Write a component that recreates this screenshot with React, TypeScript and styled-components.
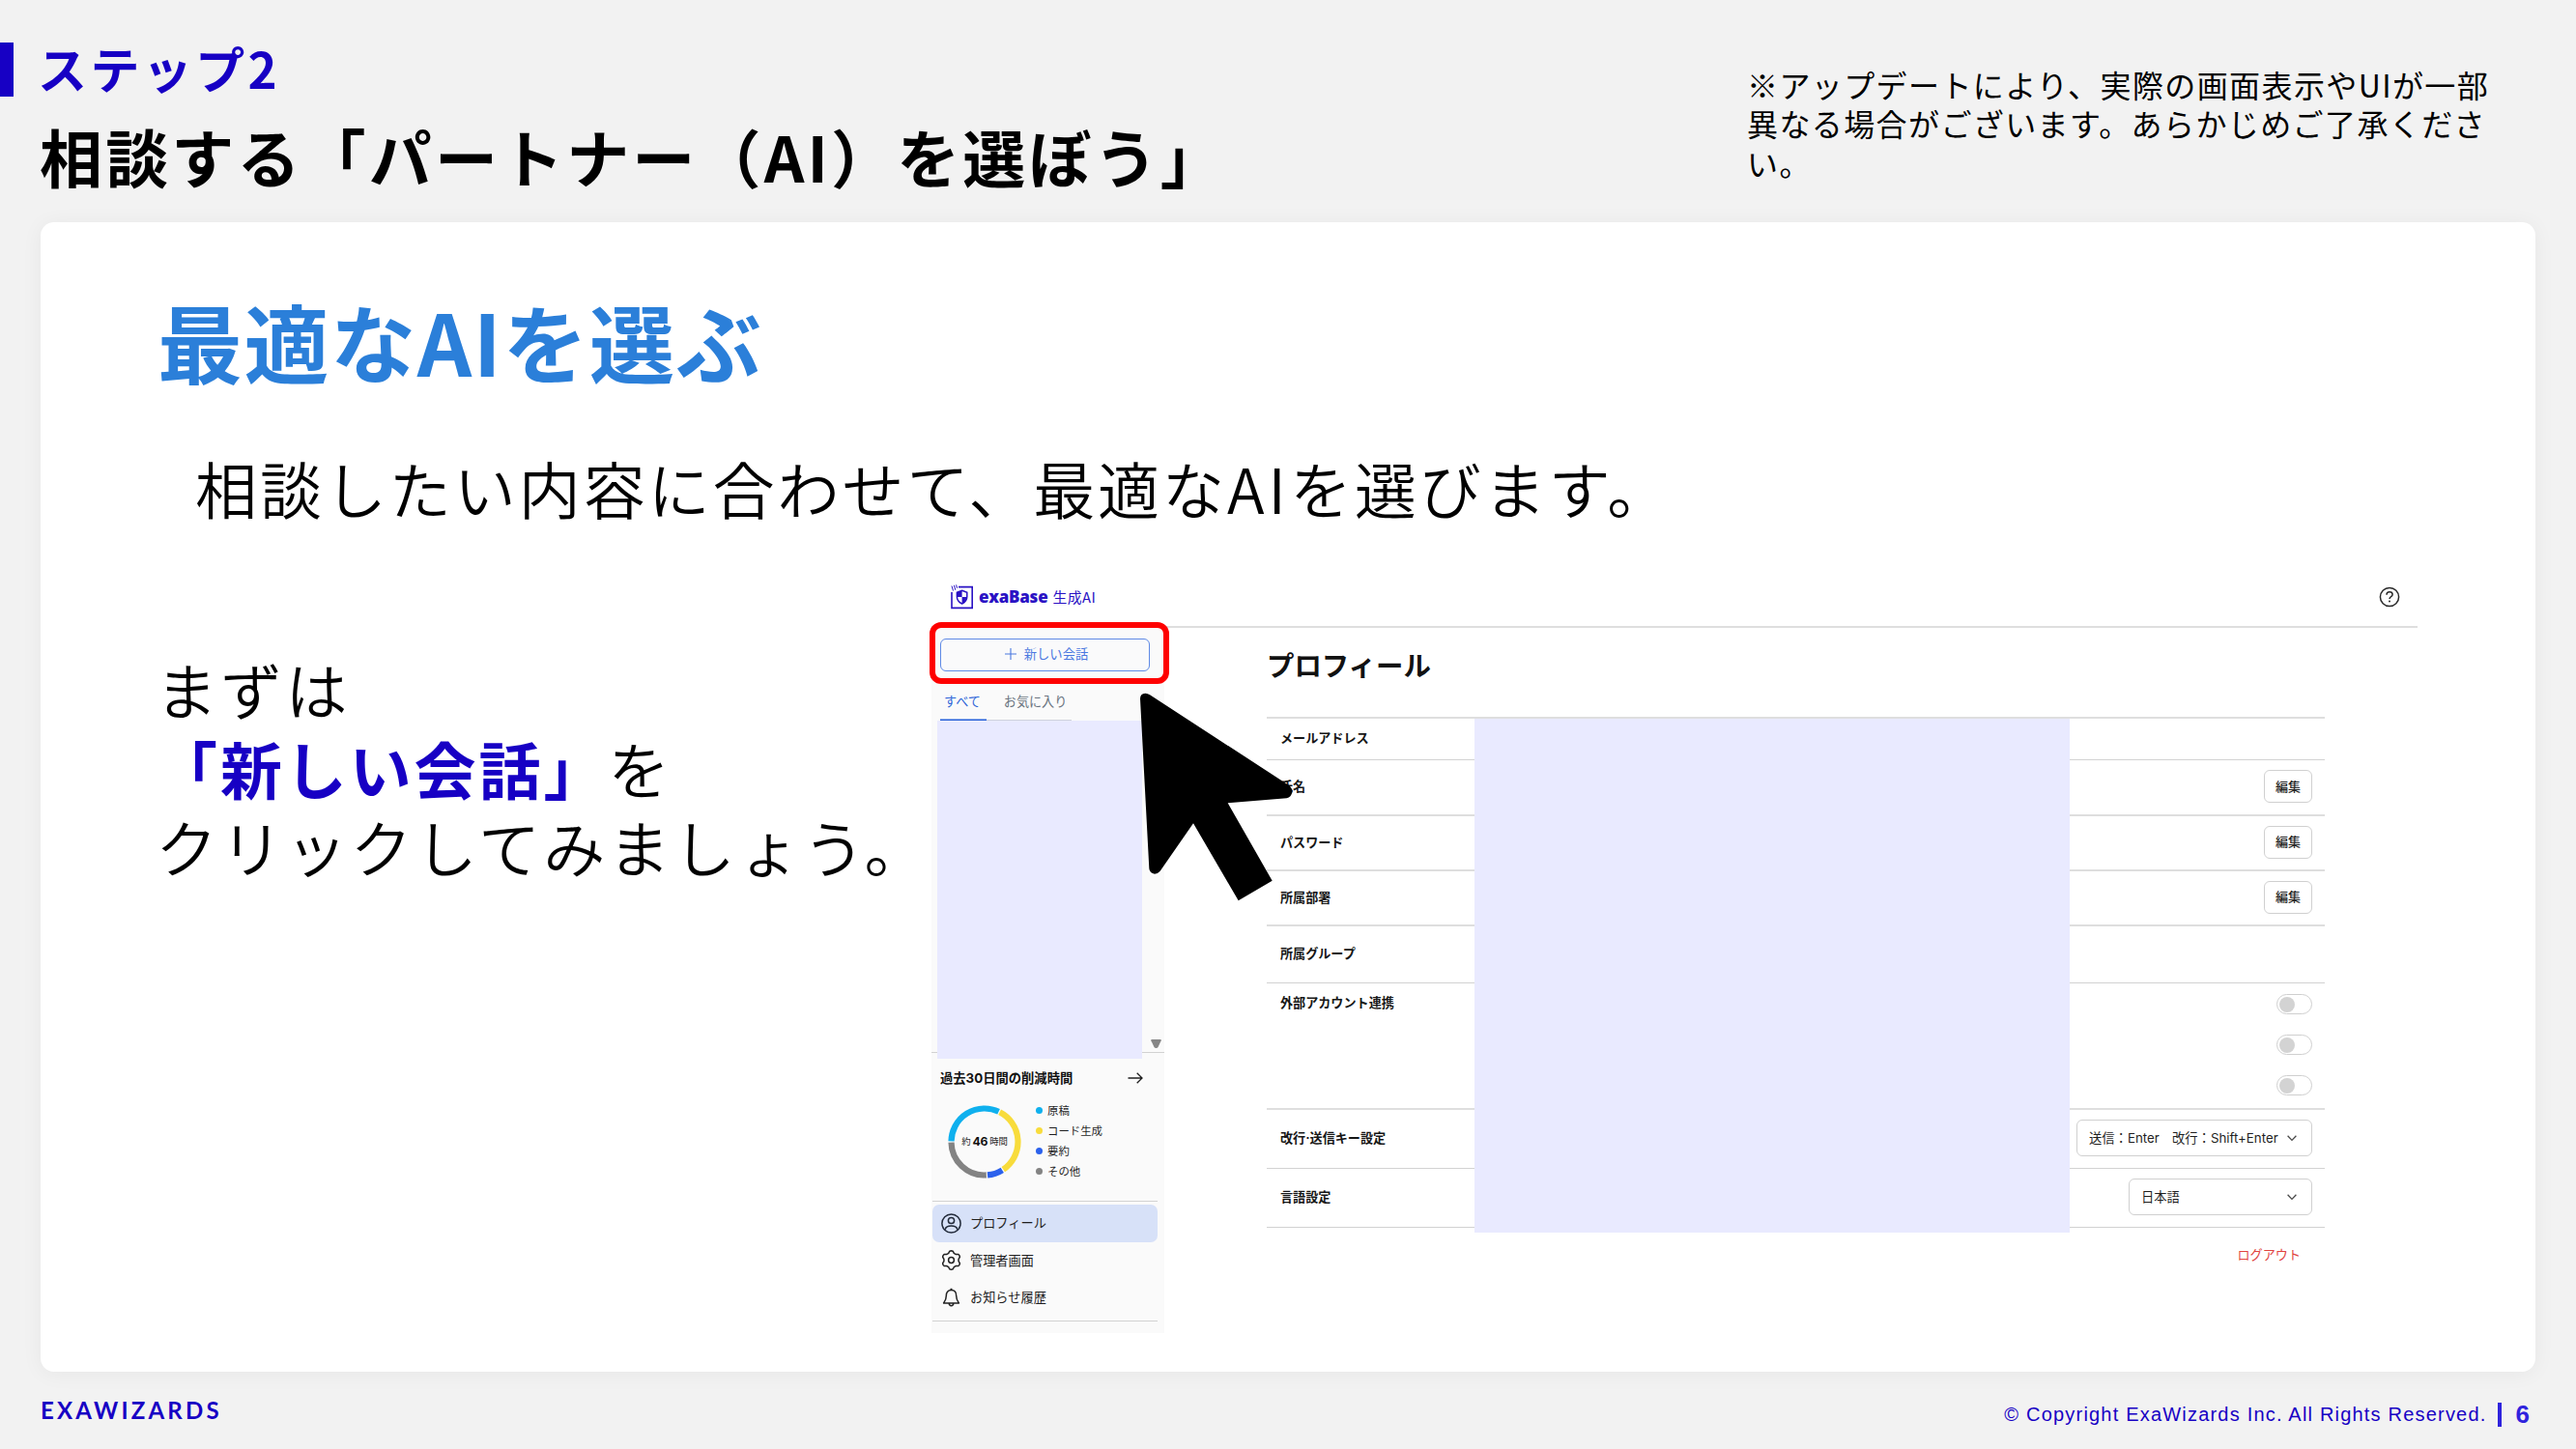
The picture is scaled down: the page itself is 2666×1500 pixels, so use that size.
import React from 'react';
import styled, { createGlobalStyle, css } from 'styled-components';

const JP = `'Noto Sans CJK JP', sans-serif`;
const UI = `Inter, 'Noto Sans CJK JP', sans-serif`;
const NAVY = '#1700c4';

const GlobalStyle = createGlobalStyle`
  *, *::before, *::after { box-sizing: border-box; }
  body { margin: 0; background: #f2f2f2; }
  p, h1, h2, h3, ul { margin: 0; padding: 0; font-weight: inherit; }
  svg { display: block; flex: none; }
`;

const Slide = styled.div`
  display: flex;
  flex-direction: column;
  width: 2666px;
  height: 1500px;
  overflow: hidden;
  background: #f2f2f2;
  color: #000;
  font-family: ${JP};
`;

/* ---------- slide header ---------- */

const Header = styled.header`
  display: flex;
  justify-content: space-between;
  height: 230px;
  padding-right: 57px;
`;

const Titles = styled.div`
  padding-top: 44px;
`;

const StepRow = styled.div`
  display: flex;
  align-items: center;
  height: 56px;
`;

const StepMarker = styled.span`
  width: 14px;
  height: 56px;
  margin-right: 25px;
  background: ${NAVY};
`;

const StepLabel = styled.p`
  margin-top: -5px;
  color: ${NAVY};
  font-size: 51px;
  font-weight: 700;
  line-height: 56px;
  letter-spacing: 3.4px;
`;

const Title = styled.h1`
  padding: 16px 0 0 41px;
  font-size: 65px;
  font-weight: 700;
  line-height: 90px;
  letter-spacing: 3.15px;
  white-space: nowrap;
`;

const Notice = styled.p`
  width: 801px;
  padding-top: 67px;
  font-size: 32px;
  line-height: 40.3px;
  letter-spacing: 1.4px;
  white-space: nowrap;
`;

/* ---------- card ---------- */

const Card = styled.main`
  display: flex;
  flex-direction: column;
  width: 2582px;
  height: 1190px;
  margin-left: 42px;
  padding: 66px 0 0 122px;
  border-radius: 14px;
  background: #fff;
  box-shadow: 0 2px 22px rgba(0, 0, 0, 0.05);
`;

const Headline = styled.h2`
  margin-left: -1px;
  color: #2b7fd9;
  font-size: 88px;
  font-weight: 700;
  line-height: 112px;
  letter-spacing: 1.6px;
`;

const Lead = styled.p`
  padding: 56px 0 0 38px;
  font-size: 64px;
  font-weight: 350;
  line-height: 80px;
  letter-spacing: 2.95px;
  white-space: nowrap;
`;

const Latin = styled.span`
  letter-spacing: 4px;
`;

const Columns = styled.div`
  display: flex;
  margin-top: 50px;
`;

const Guide = styled.p`
  width: 803px;
  margin-left: -3px;
  padding-top: 78px;
  font-size: 64px;
  font-weight: 350;
  line-height: 81.5px;
  letter-spacing: 3.2px;
  white-space: nowrap;
`;

const Strong = styled.strong`
  color: ${NAVY};
  font-weight: 700;
  letter-spacing: 2.9px;
`;

/* ---------- product window ---------- */

const Window = styled.section`
  position: relative;
  width: 1538px;
  height: 786px;
  color: #1f1f1f;
  font-family: ${UI};
  font-size: 13.1px;
  line-height: 18px;
`;

const TopBar = styled.div`
  display: flex;
  align-items: center;
  justify-content: space-between;
  height: 56px;
  padding: 0 18px 7px 20px;
  border-bottom: 2px solid #dedede;
`;

const Brand = styled.div`
  display: flex;
  align-items: center;
  color: #2a12c4;
`;

const BrandName = styled.span`
  margin-left: 6px;
  font-family: 'Open Sans', sans-serif;
  font-size: 17px;
  font-weight: 800;
  line-height: 22px;
  letter-spacing: -0.25px;
`;

const BrandSuffix = styled.span`
  margin-left: 5px;
  font-family: ${JP};
  font-size: 14.8px;
  line-height: 20px;
  letter-spacing: 0.5px;
`;

const Body = styled.div`
  display: flex;
`;

const Sidebar = styled.aside`
  width: 241px;
  height: 730px;
  background: #fafafa;
`;

const NewChat = styled.button`
  display: flex;
  align-items: center;
  justify-content: center;
  gap: 8px;
  width: 217px;
  height: 34px;
  margin: 11px 0 0 9px;
  padding: 0 0 3px 3px;
  border: 1.5px solid #5f8ae6;
  border-radius: 6px;
  background: #fafafb;
  color: #4a78e0;
  font-family: ${UI};
  font-size: 13.3px;
`;

const Tabs = styled.div`
  display: flex;
  height: 51px;
  padding: 22px 0 0 9px;
`;

const Tab = styled.span<{ $active?: boolean }>`
  height: 29px;
  padding: ${p => (p.$active ? '0 6px 0 4px' : '0 5px 0 18px')};
  border-bottom: 1px solid ${p => (p.$active ? '#2f66d8' : '#cfd2dc')};
  color: ${p => (p.$active ? '#2f66d8' : '#6a7480')};
  ${p => p.$active && css`box-shadow: inset 0 -1px #7fa2ea;`}
`;

const HistoryArea = styled.div`
  position: relative;
  display: flex;
  height: 344px;
  align-items: flex-end;
  justify-content: flex-end;
  padding: 0 3px 4px 0;
  border-bottom: 1px solid #d2d2d2;
`;

const HistoryMask = styled.div`
  position: absolute;
  top: 0;
  left: 6px;
  width: 212px;
  height: 350px;
  background: #e9eaff;
`;

const StatsHead = styled.div`
  display: flex;
  align-items: center;
  justify-content: space-between;
  height: 54px;
  padding: 0 22px 2px 9px;
  color: #111;
  font-weight: 700;
  font-size: 13.3px;
`;

const Stats = styled.div`
  display: flex;
  height: 99px;
  padding-left: 17px;
`;

const Donut = styled.div`
  display: grid;
  width: 76px;
  height: 76px;
  > * { grid-area: 1 / 1; }
`;

const DonutLabel = styled.span`
  display: flex;
  align-items: center;
  justify-content: center;
  gap: 2px;
  font-size: 9.4px;
  letter-spacing: -0.2px;
  b { font-size: 12.2px; color: #111; }
`;

const Legend = styled.ul`
  display: flex;
  flex-direction: column;
  margin: -5px 0 0 15px;
  list-style: none;
`;

const LegendItem = styled.li<{ $color: string }>`
  display: flex;
  align-items: center;
  gap: 5px;
  height: 21px;
  font-size: 11.4px;
  &::before {
    content: '';
    width: 7px;
    height: 7px;
    border-radius: 50%;
    background: ${p => p.$color};
  }
`;

const Menu = styled.nav`
  width: 233px;
  height: 125px;
  margin-left: 1px;
  padding-top: 3px;
  border: solid #d2d2d2;
  border-width: 1px 0;
`;

const MenuItem = styled.div<{ $active?: boolean }>`
  display: flex;
  align-items: center;
  gap: 9px;
  height: 38.5px;
  padding-left: 9px;
  border-radius: 7px;
  background: ${p => (p.$active ? '#d7e1f8' : 'transparent')};
  font-size: 13.2px;
`;

const Main = styled.div`
  width: 1095px;
  margin-left: 106px;
`;

const PageTitle = styled.h3`
  height: 94px;
  padding: 21px 0 0;
  border-bottom: 2px solid #dedede;
  color: #111;
  font-size: 28.4px;
  font-weight: 700;
  line-height: 38px;
`;

const Table = styled.div`
  position: relative;
`;

const TableMask = styled.div`
  position: absolute;
  top: 0;
  left: 215px;
  width: 616px;
  height: 532px;
  background: #e9eaff;
`;

const Row = styled.div<{ $height: number; $thin?: boolean; $top?: boolean }>`
  display: flex;
  align-items: ${p => (p.$top ? 'flex-start' : 'center')};
  justify-content: space-between;
  height: ${p => p.$height}px;
  padding: ${p => (p.$top ? '11px 13px 0' : '0 13px 2px')} 14px;
  border-bottom: ${p => (p.$thin ? '1px solid #d2d2d2' : '2px solid #dedede')};
`;

const RowLabel = styled.span`
  color: #161616;
  font-weight: 700;
`;

const EditButton = styled.button`
  width: 50px;
  height: 34px;
  padding: 0 0 2px;
  border: 1px solid #d0d0d0;
  border-radius: 6px;
  background: #fff;
  color: #1f1f1f;
  font-family: ${UI};
  font-size: 13px;
  font-weight: 500;
`;

const Switches = styled.div`
  display: flex;
  flex-direction: column;
  gap: 21px;
`;

const Switch = styled.span`
  display: flex;
  align-items: center;
  width: 37px;
  height: 21px;
  padding-left: 2px;
  border: 1px solid #cfcfcf;
  border-radius: 11px;
  &::before {
    content: '';
    width: 16px;
    height: 16px;
    border-radius: 50%;
    background: #d3d3d3;
  }
`;

const Select = styled.div<{ $width: number }>`
  display: flex;
  align-items: center;
  justify-content: space-between;
  width: ${p => p.$width}px;
  height: 38px;
  padding: 0 15px 0 12px;
  border: 1px solid #d0d0d0;
  border-radius: 6px;
  font-size: 13.3px;
  white-space: nowrap;
`;

const Logout = styled.p`
  padding: 19px 25px 0 0;
  color: #e0443f;
  text-align: right;
`;

const Highlight = styled.div`
  position: absolute;
  top: 50px;
  left: -2px;
  width: 248px;
  height: 64px;
  border: 6px solid #fe0000;
  border-radius: 12px;
`;

const CursorArrow = styled.svg`
  position: absolute;
  top: 123px;
  left: 215px;
`;

/* ---------- slide footer ---------- */

const Footer = styled.footer`
  display: flex;
  justify-content: space-between;
  height: 80px;
  padding: 23px 48px 0 42px;
  color: ${NAVY};
`;

const Wordmark = styled.span`
  font-family: Lato, sans-serif;
  font-size: 24px;
  font-weight: 700;
  line-height: 33px;
  letter-spacing: 3.2px;
`;

const Copyright = styled.div`
  display: flex;
  align-items: center;
  height: 40px;
  padding-top: 3px;
  font-family: 'Liberation Sans', sans-serif;
  font-size: 20px;
  letter-spacing: 1.2px;
`;

const Divider = styled.i`
  width: 4px;
  height: 25px;
  margin: 0 15px 0 11px;
  background: #2f23dd;
`;

const PageNumber = styled.b`
  color: #2f23dd;
  font-size: 26px;
  letter-spacing: 0;
`;

/* ---------- drawings ---------- */

const BrandIcon = () => (
  <svg width="23" height="26" viewBox="0 0 23 26" fill="none" stroke="#2a12c4">
    <path d="M8 2.6H22.2V24.4H1V8" strokeWidth="1.6" />
    <path d="M1 1.5l1.5 5M3.4.8l1.4 5M5.6.4l1 3.4" strokeWidth="1" />
    <path d="M11.6 6.2l5.2 2v4.6c0 3.4-2.2 5.8-5.2 7.2-3-1.4-5.2-3.8-5.2-7.2V8.2z" strokeWidth="1.5" />
    <path d="M11.6 6.2v6.7h5.2c0 3.4-2.2 5.7-5.2 7.1v-7.1H6.4V8.2z" fill="#2a12c4" stroke="none" />
  </svg>
);

const HelpIcon = () => (
  <svg width="22" height="22" viewBox="0 0 22 22" fill="none" stroke="#2a2a2a" strokeWidth="1.5">
    <circle cx="11" cy="11" r="9.6" />
    <path d="M8 8.7c0-3.9 6.1-3.7 6.1-.2 0 2.3-3.1 2.1-3.1 4.5" />
    <circle cx="11" cy="15.6" r="1" fill="#2a2a2a" stroke="none" />
  </svg>
);

const PlusIcon = () => (
  <svg width="12" height="12" viewBox="0 0 12 12" stroke="#4a78e0" strokeWidth="1.1">
    <path d="M6 0v12M0 6h12" />
  </svg>
);

const ArrowIcon = () => (
  <svg width="16" height="12" viewBox="0 0 16 12" fill="none" stroke="#1f1f1f" strokeWidth="1.3">
    <path d="M.5 6h14.6M9.7.8L15 6l-5.3 5.2" />
  </svg>
);

const ScrollDown = () => (
  <svg width="11" height="9" viewBox="0 0 11 9" fill="#868686">
    <path d="M1 0h9q1 0 .7 1.2L7.5 8q-.5 1-2 1T3.5 8L.3 1.2Q0 0 1 0z" />
  </svg>
);

const Chevron = () => (
  <svg width="10" height="7" viewBox="0 0 10 7" fill="none" stroke="#4a4a4a" strokeWidth="1.3">
    <path d="M.6.8L5 5.4 9.4.8" />
  </svg>
);

const UserIcon = () => (
  <svg width="21" height="21" viewBox="0 0 21 21" fill="none" stroke="#222a3a" strokeWidth="1.5">
    <circle cx="10.5" cy="10.5" r="9.6" />
    <circle cx="10.5" cy="7.5" r="3.1" />
    <path d="M4 16.800c1.400-5 11.600-5 13 0" />
  </svg>
);

const gearOutline = Array.from({ length: 73 }, (_, i) => {
  const a = (i * 5 * Math.PI) / 180;
  const wave = Math.cos(6 * a);
  const r = 8.6 + 1.1 * Math.tanh(1.8 * wave);
  return `${(10.5 + r * Math.sin(a)).toFixed(2)} ${(10.5 - r * Math.cos(a)).toFixed(2)}`;
}).join('L');

const GearIcon = () => (
  <svg width="21" height="21" viewBox="0 0 21 21" fill="none" stroke="#222" strokeWidth="1.5" strokeLinejoin="round">
    <path d={`M${gearOutline}Z`} />
    <circle cx="10.5" cy="10.5" r="2.9" />
  </svg>
);

const BellIcon = () => (
  <svg width="21" height="21" viewBox="0 0 21 21" fill="none" stroke="#222" strokeWidth="1.5" strokeLinejoin="round">
    <path d="M10.500 2.600c-3.600 0-5.200 2.700-5.200 5.800 0 3.900-1.400 5.500-2.700 7.600h15.800c-1.300-2.100-2.700-3.700-2.700-7.600 0-3.100-1.600-5.800-5.200-5.800zM8.200 16.300c.3 3.300 4.300 3.300 4.600 0M9.500 1.600h2" />
  </svg>
);

const SEGMENTS = [
  { from: 270, to: 386, color: '#0fb0ee' },
  { from: 26, to: 147, color: '#f8dc3c' },
  { from: 147, to: 176, color: '#2b61ec' },
  { from: 176, to: 270, color: '#838383' },
];

const point = (deg: number) => {
  const a = (deg * Math.PI) / 180;
  return `${38 + 34.5 * Math.sin(a)} ${38 - 34.5 * Math.cos(a)}`;
};

const DonutChart = () => (
  <svg width="76" height="76" viewBox="0 0 76 76" fill="none" strokeWidth="6.2">
    {SEGMENTS.map(s => (
      <path
        key={s.color}
        stroke={s.color}
        d={`M${point(s.from + 1)}A34.5 34.5 0 0 1 ${point(s.to - 1)}`}
      />
    ))}
  </svg>
);

const Cursor = () => (
  <CursorArrow width="160" height="216" viewBox="687 379 480 648">
    <path d="M690 398Q690 382 706 381Q713 381 720 386L1152 667Q1163 676 1162 688Q1159 704 1145 707L962 722L1100 963L995 1025L855 785L752 933Q744 942 735 942Q720 941 718 926Z" />
  </CursorArrow>
);

const LEGEND = [
  ['原稿', '#0fb0ee'],
  ['コード生成', '#f8dc3c'],
  ['要約', '#2b61ec'],
  ['その他', '#838383'],
];

const MENU = [
  { label: 'プロフィール', icon: <UserIcon />, active: true },
  { label: '管理者画面', icon: <GearIcon /> },
  { label: 'お知らせ履歴', icon: <BellIcon /> },
];

const ProductWindow = () => (
  <Window>
    <TopBar>
      <Brand>
        <BrandIcon />
        <BrandName>exaBase</BrandName>
        <BrandSuffix>生成AI</BrandSuffix>
      </Brand>
      <HelpIcon />
    </TopBar>
    <Body>
      <Sidebar>
        <NewChat><PlusIcon />新しい会話</NewChat>
        <Tabs>
          <Tab $active>すべて</Tab>
          <Tab>お気に入り</Tab>
        </Tabs>
        <HistoryArea>
          <HistoryMask />
          <ScrollDown />
        </HistoryArea>
        <StatsHead>過去30日間の削減時間<ArrowIcon /></StatsHead>
        <Stats>
          <Donut>
            <DonutChart />
            <DonutLabel>約<b>46</b>時間</DonutLabel>
          </Donut>
          <Legend>
            {LEGEND.map(([name, color]) => (
              <LegendItem key={name} $color={color}>{name}</LegendItem>
            ))}
          </Legend>
        </Stats>
        <Menu>
          {MENU.map(m => (
            <MenuItem key={m.label} $active={m.active}>{m.icon}{m.label}</MenuItem>
          ))}
        </Menu>
      </Sidebar>
      <Main>
        <PageTitle>プロフィール</PageTitle>
        <Table>
          <Row $height={43} $thin><RowLabel>メールアドレス</RowLabel></Row>
          <Row $height={58}><RowLabel>氏名</RowLabel><EditButton>編集</EditButton></Row>
          <Row $height={57}><RowLabel>パスワード</RowLabel><EditButton>編集</EditButton></Row>
          <Row $height={57}><RowLabel>所属部署</RowLabel><EditButton>編集</EditButton></Row>
          <Row $height={59} $thin><RowLabel>所属グループ</RowLabel></Row>
          <Row $height={131} $top>
            <RowLabel>外部アカウント連携</RowLabel>
            <Switches><Switch /><Switch /><Switch /></Switches>
          </Row>
          <Row $height={61} $thin>
            <RowLabel>改行·送信キー設定</RowLabel>
            <Select $width={244}>送信：Enter　改行：Shift+Enter<Chevron /></Select>
          </Row>
          <Row $height={61} $thin>
            <RowLabel>言語設定</RowLabel>
            <Select $width={190}>日本語<Chevron /></Select>
          </Row>
          <TableMask />
        </Table>
        <Logout>ログアウト</Logout>
      </Main>
    </Body>
    <Highlight />
    <Cursor />
  </Window>
);

export default function App() {
  return (
    <Slide lang="ja">
      <GlobalStyle />
      <Header>
        <Titles>
          <StepRow>
            <StepMarker />
            <StepLabel>ステップ2</StepLabel>
          </StepRow>
          <Title>相談する「パートナー（AI）を選ぼう」</Title>
        </Titles>
        <Notice>
          ※アップデートにより、実際の画面表示やUIが一部<br />
          異なる場合がございます。あらかじめご了承くださ<br />
          い。
        </Notice>
      </Header>
      <Card>
        <Headline>最適なAIを選ぶ</Headline>
        <Lead>相談したい内容に合わせて、最適な<Latin>AI</Latin>を選びます。</Lead>
        <Columns>
          <Guide>
            まずは<br />
            <Strong>「新しい会話」</Strong>を<br />
            クリックしてみましょう。
          </Guide>
          <ProductWindow />
        </Columns>
      </Card>
      <Footer>
        <Wordmark>EXAWIZARDS</Wordmark>
        <Copyright>
          © Copyright ExaWizards Inc. All Rights Reserved.
          <Divider />
          <PageNumber>6</PageNumber>
        </Copyright>
      </Footer>
    </Slide>
  );
}
